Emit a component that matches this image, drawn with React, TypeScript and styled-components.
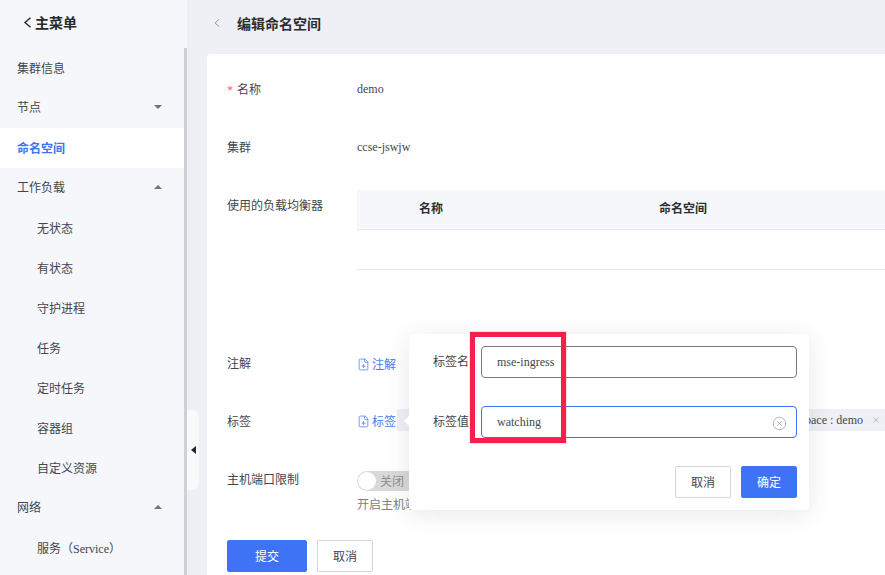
import React from 'react';
import styled, { createGlobalStyle } from 'styled-components';
import { ChevronLeft, CircleX, FilePlus, X } from 'lucide-react';

const GlobalStyle = createGlobalStyle`
  html, body {
    margin: 0;
    padding: 0;
    height: 100%;
    overflow: hidden;
  }
  body {
    font-family: "Liberation Serif", "Noto Sans CJK SC", serif;
    font-size: 12px;
    color: #43464d;
    background: #eff0f5;
  }
  * {
    box-sizing: border-box;
  }
`;

const Page = styled.div`
  position: relative;
  display: flex;
  width: 885px;
  height: 575px;
  overflow: hidden;
`;

const Sidebar = styled.aside`
  flex: 0 0 187px;
  height: 575px;
  background: #f6f7fa;
  overflow: hidden;
`;

const SidebarHead = styled.div`
  display: flex;
  align-items: center;
  gap: 3px;
  height: 48px;
  padding: 0 0 4px 23px;
  font-size: 14px;
  font-weight: 700;
  color: #26282c;
`;

const MenuScroll = styled.div`
  height: 527px;
  border-right: 3px solid #cfd0d3;
  overflow: hidden;
`;

const MenuItem = styled.div<{ $active?: boolean; $child?: boolean; $parent?: boolean }>`
  display: flex;
  align-items: center;
  justify-content: space-between;
  height: 40px;
  padding: 0 22px ${({ $parent }) => ($parent ? 2 : 0)}px ${({ $child }) => ($child ? 37 : 17)}px;
  background: ${({ $active }) => ($active ? '#fff' : 'transparent')};
  color: ${({ $active }) => ($active ? '#3e73f6' : '#43464d')};
  font-weight: ${({ $active }) => ($active ? 700 : 400)};
`;

const Caret = styled.span<{ $up?: boolean }>`
  width: 0;
  height: 0;
  border-left: 4px solid transparent;
  border-right: 4px solid transparent;
  border-top: ${({ $up }) => ($up ? 'none' : '4px solid #6f737b')};
  border-bottom: ${({ $up }) => ($up ? '4px solid #6f737b' : 'none')};
`;

const CollapseHandle = styled.div`
  position: absolute;
  left: 187px;
  top: 410px;
  display: flex;
  align-items: center;
  justify-content: center;
  width: 12px;
  height: 80px;
  background: #f8f9fb;
  border-radius: 0 8px 8px 0;
  &::before {
    content: '';
    border-top: 4px solid transparent;
    border-bottom: 4px solid transparent;
    border-right: 5px solid #23252a;
  }
`;

const Main = styled.main`
  flex: 1;
  min-width: 0;
  padding-left: 20px;
`;

const TitleBar = styled.div`
  display: flex;
  align-items: center;
  height: 54px;
  margin-left: -20px;
  padding: 0 0 8px 23px;
  font-size: 14px;
  font-weight: 700;
  color: #2c2e33;
`;

const BackIcon = styled(ChevronLeft)`
  width: 14px;
  height: 14px;
  margin-right: 13px;
  color: #6f737b;
`;

const Card = styled.section`
  height: 521px;
  padding: 20px 0 0 20px;
  background: #fff;
  border-radius: 4px 0 0 0;
  overflow: hidden;
`;

const FormRow = styled.div<{ $height?: number }>`
  display: flex;
  height: ${({ $height }) => $height ?? 30}px;
  margin-bottom: 28px;
`;

const Label = styled.div`
  flex: 0 0 130px;
  line-height: 32px;
  color: #43464d;
`;

const Required = styled.span`
  margin-right: 4px;
  color: #f5587b;
`;

const Value = styled.div`
  line-height: 30px;
  color: #43464d;
`;

const Field = styled.div`
  flex: 1;
  min-width: 0;
`;

const TableHead = styled.div`
  display: grid;
  grid-template-columns: 240px 240px 1fr;
  height: 40px;
  padding: 0 0 4px 62px;
  align-items: center;
  background: #f6f7fa;
  border-bottom: 1px solid #eaebef;
  font-weight: 700;
  color: #2c2e33;
`;

const TableRow = styled.div`
  height: 40px;
  border-bottom: 1px solid #eaebef;
`;

const AddLink = styled.span`
  display: inline-flex;
  flex: none;
  align-items: center;
  gap: 2px;
  height: 32px;
  color: #4a7cf6;
`;

const AddIcon = styled(FilePlus)`
  width: 13px;
  height: 13px;
`;

const TagRow = styled.div`
  display: flex;
  align-items: center;
  gap: 1px;
  height: 30px;
  white-space: nowrap;
`;

const Tag = styled.span`
  display: flex;
  flex: none;
  align-items: center;
  justify-content: flex-end;
  gap: 8px;
  width: 488px;
  height: 22px;
  margin-bottom: 2px;
  padding-right: 4px;
  background: #eff0f5;
  border-radius: 2px 0 0 2px;
  color: #43464d;
`;

const TagClose = styled(X)`
  width: 10px;
  height: 10px;
  color: #9a9da4;
`;

const SwitchTrack = styled.div`
  display: flex;
  align-items: center;
  gap: 4px;
  width: 64px;
  height: 20px;
  margin-top: 7px;
  padding-left: 1px;
  background: #d9d9d9;
  border-radius: 10px;
  color: #8c8e92;
`;

const SwitchKnob = styled.span`
  width: 18px;
  height: 18px;
  background: #fff;
  border-radius: 50%;
`;

const Help = styled.div`
  margin-top: 4px;
  color: #7d8087;
  white-space: nowrap;
`;

const Actions = styled.div<{ $end?: boolean }>`
  display: flex;
  justify-content: ${({ $end }) => ($end ? 'flex-end' : 'flex-start')};
  gap: 10px;
`;

const Button = styled.button<{ $primary?: boolean; $width: number; $height: number }>`
  width: ${({ $width }) => $width}px;
  height: ${({ $height }) => $height}px;
  padding: 0;
  background: ${({ $primary }) => ($primary ? '#3e73f6' : '#fff')};
  border: 1px solid ${({ $primary }) => ($primary ? '#3e73f6' : '#d4d5d9')};
  border-radius: 2px;
  color: ${({ $primary }) => ($primary ? '#fff' : '#43464d')};
  font-family: inherit;
  font-size: 12px;
`;

const Popover = styled.div`
  position: absolute;
  left: 409px;
  top: 334px;
  display: flex;
  flex-direction: column;
  gap: 28px;
  width: 400px;
  height: 176px;
  padding: 12px;
  background: #fff;
  border-radius: 4px;
  box-shadow: 0 4px 24px rgba(60, 66, 90, 0.12);
  &::before {
    content: '';
    position: absolute;
    left: -5px;
    top: 82px;
    border-top: 5px solid transparent;
    border-bottom: 5px solid transparent;
    border-right: 5px solid #fff;
  }
`;

const PopoverRow = styled.div`
  display: flex;
  align-items: center;
  gap: 12px;
  padding-left: 12px;
  height: 32px;
`;

const PopoverLabel = styled.span`
  flex: none;
  width: 36px;
  padding-bottom: 2px;
  color: #43464d;
`;

const InputBox = styled.div<{ $focus?: boolean }>`
  display: flex;
  flex: 1;
  align-items: center;
  justify-content: space-between;
  height: 32px;
  padding: 0 9px 0 15px;
  border: 1px solid ${({ $focus }) => ($focus ? '#3e73f6' : '#7b7b7b')};
  border-radius: 4px;
  color: #43464d;
`;

const ClearIcon = styled(CircleX)`
  width: 15px;
  height: 15px;
  margin-top: 2px;
  color: #a4a7ad;
`;

const Highlight = styled.div`
  position: absolute;
  left: 470px;
  top: 332px;
  width: 96px;
  height: 111px;
  border: 5px solid #f91f4c;
  box-shadow: 0 0 0 1px rgba(249, 31, 76, 0.12);
  pointer-events: none;
`;

const menu = [
  { label: '集群信息' },
  { label: '节点', caret: 'down' },
  { label: '命名空间', active: true },
  { label: '工作负载', caret: 'up' },
  { label: '无状态', child: true },
  { label: '有状态', child: true },
  { label: '守护进程', child: true },
  { label: '任务', child: true },
  { label: '定时任务', child: true },
  { label: '容器组', child: true },
  { label: '自定义资源', child: true },
  { label: '网络', caret: 'up' },
  { label: '服务（Service）', child: true },
];

const App = () => {
  return (
    <Page>
      <GlobalStyle />
      <Sidebar>
        <SidebarHead>
          <svg width="9" height="11" viewBox="0 0 9 11" fill="none">
            <polyline points="7.5,0.8 2,5.5 7.5,10.2" stroke="#26282c" strokeWidth="1.4" />
          </svg>
          主菜单
        </SidebarHead>
        <MenuScroll>
          {menu.map((item) => (
            <MenuItem
              key={item.label}
              $active={item.active}
              $child={item.child}
              $parent={!!item.caret}
            >
              {item.label}
              {item.caret && <Caret $up={item.caret === 'up'} />}
            </MenuItem>
          ))}
        </MenuScroll>
      </Sidebar>
      <CollapseHandle />

      <Main>
        <TitleBar>
          <BackIcon strokeWidth={1.4} />
          编辑命名空间
        </TitleBar>
        <Card>
          <FormRow>
            <Label>
              <Required>*</Required>名称
            </Label>
            <Value>demo</Value>
          </FormRow>
          <FormRow>
            <Label>集群</Label>
            <Value>ccse-jswjw</Value>
          </FormRow>
          <FormRow $height={130}>
            <Label>使用的负载均衡器</Label>
            <Field>
              <TableHead>
                <span>名称</span>
                <span>命名空间</span>
              </TableHead>
              <TableRow />
            </Field>
          </FormRow>
          <FormRow>
            <Label>注解</Label>
            <AddLink>
              <AddIcon strokeWidth={1.4} />
              注解
            </AddLink>
          </FormRow>
          <FormRow>
            <Label>标签</Label>
            <TagRow>
              <AddLink>
                <AddIcon strokeWidth={1.4} />
                标签
              </AddLink>
              <Tag>
                namespace : demo
                <TagClose strokeWidth={1.5} />
              </Tag>
            </TagRow>
          </FormRow>
          <FormRow $height={48}>
            <Label>主机端口限制</Label>
            <Field>
              <SwitchTrack>
                <SwitchKnob />
                关闭
              </SwitchTrack>
              <Help>开启主机端口限制</Help>
            </Field>
          </FormRow>
          <Actions>
            <Button $primary $width={80} $height={32}>
              提交
            </Button>
            <Button $width={56} $height={32}>
              取消
            </Button>
          </Actions>
        </Card>
      </Main>

      <Popover>
        <PopoverRow>
          <PopoverLabel>标签名</PopoverLabel>
          <InputBox>mse-ingress</InputBox>
        </PopoverRow>
        <PopoverRow>
          <PopoverLabel>标签值</PopoverLabel>
          <InputBox $focus>
            watching
            <ClearIcon strokeWidth={1.3} />
          </InputBox>
        </PopoverRow>
        <Actions $end>
          <Button $width={56} $height={32}>
            取消
          </Button>
          <Button $primary $width={56} $height={32}>
            确定
          </Button>
        </Actions>
      </Popover>
      <Highlight />
    </Page>
  );
};

export default App;
